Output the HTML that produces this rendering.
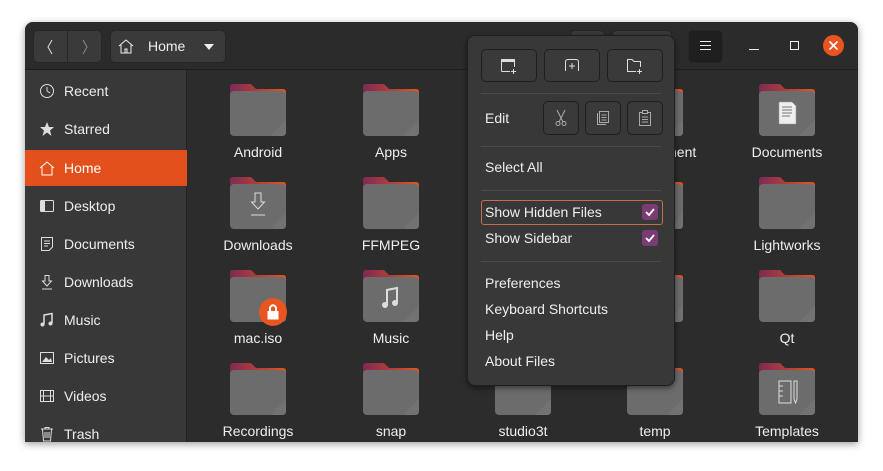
<!DOCTYPE html>
<html><head><meta charset="utf-8"><style>
*{margin:0;padding:0;box-sizing:border-box}
body{width:883px;height:471px;background:#fff;position:relative;overflow:hidden;font-family:"Liberation Sans","DejaVu Sans",sans-serif;color:#eee}
.win{position:absolute;left:25px;top:22px;width:833px;height:420px;background:#2c2c2c;border-radius:8px 8px 0 0;overflow:hidden;box-shadow:0 2px 8px rgba(0,0,0,.4)}
.hdr{position:absolute;left:0;top:0;width:833px;height:48px;background:#2b2b2b;border-bottom:1px solid #1d1d1d}
.btn{position:absolute;background:#3a3a3a;border:1px solid #262626;border-radius:5px}
.side{position:absolute;left:0;top:48px;width:162px;height:372px;background:#383838;border-right:1px solid #222}
.si{position:absolute;left:0;width:162px;height:36px;font-size:14px;line-height:36px;padding-left:39px}
.si svg{position:absolute;left:14px;top:10px}
.f{position:absolute;width:132px;text-align:center;font-size:14px}
.f svg{display:block;margin:0 auto;overflow:visible}
.f span{display:block;margin-top:8px}
.menu{position:absolute;left:467px;top:35px;width:208px;height:351px;background:#383838;border:1px solid #1f1f1f;border-radius:8px;box-shadow:0 2px 6px rgba(0,0,0,.5)}
.mb{position:absolute;background:#3a3a3a;border:1px solid #1f1f1f;border-radius:5px}
.mt{position:absolute;left:17px;font-size:14px}
.sep{position:absolute;left:13px;width:180px;height:1px;background:#4a4a4a}
.chk{position:absolute;left:174px;width:16px;height:16px;background:#7a3c72;border-radius:3px}
</style></head><body>
<svg width="0" height="0" style="position:absolute"><defs>
<linearGradient id="g" x1="0" x2="1" y1="0" y2="0"><stop offset="0" stop-color="#7e2a55"/><stop offset="1" stop-color="#e4541f"/></linearGradient>
<symbol id="fd" viewBox="0 0 56 52"><path d="M3 0H21L26 5H53Q56 5 56 8V20H0V3Q0 0 3 0Z" fill="url(#g)"/><rect y="7" width="56" height="45" rx="4" fill="#6c6c6c"/><path d="M56 36V48Q56 52 52 52H40Z" fill="#727272"/></symbol>
</defs></svg>
<div class="win">
<div class="hdr">
 <div class="btn" style="left:8px;top:8px;width:69px;height:33px"></div>
 <div style="position:absolute;left:42px;top:8px;width:1px;height:33px;background:#262626"></div>
 <svg style="position:absolute;left:20px;top:17px" width="10" height="16"><path d="M7 1L3 8L7 15" stroke="#ddd" fill="none"/></svg>
 <svg style="position:absolute;left:55px;top:17px" width="10" height="16"><path d="M3 1L7 8L3 15" stroke="#888" fill="none"/></svg>
 <div class="btn" style="left:85px;top:8px;width:116px;height:33px"></div>
 <svg style="position:absolute;left:93px;top:16px" width="16" height="16"><path d="M1 8L8 2L15 8M3 7V15H13V7M7 15V11H9V15" stroke="#eee" fill="none"/></svg>
 <div style="position:absolute;left:123px;top:16px;font-size:14px">Home</div>
 <svg style="position:absolute;left:178px;top:21px" width="12" height="8"><path d="M1 1H11L6 7Z" fill="#eee"/></svg>
 <div class="btn" style="left:545px;top:8px;width:35px;height:33px"></div>
 <div class="btn" style="left:587px;top:8px;width:60px;height:33px"></div>
 <div class="btn" style="left:663px;top:8px;width:35px;height:33px;background:#1f1f1f"></div>
 <div style="position:absolute;left:675px;top:19px;width:11px;height:1px;background:#eee;box-shadow:0 4px 0 #eee,0 8px 0 #eee"></div>
 <div style="position:absolute;left:724px;top:27px;width:10px;height:1px;background:#eee"></div>
 <div style="position:absolute;left:765px;top:19px;width:9px;height:9px;border:1px solid #eee"></div>
 <div style="position:absolute;left:798px;top:13px;width:21px;height:21px;border-radius:50%;background:#e95420"></div>
 <svg style="position:absolute;left:803px;top:18px" width="11" height="11"><path d="M1.5 1.5L9.5 9.5M9.5 1.5L1.5 9.5" stroke="#fff" stroke-width="1.6"/></svg>
</div>
<div class="side">
 <div class="si" style="top:3px"><svg width="16" height="16"><circle cx="8" cy="8" r="6.5" stroke="#ddd" fill="none"/><path d="M8 4V8L11 10" stroke="#ddd" fill="none"/></svg>Recent</div>
 <div class="si" style="top:41px"><svg width="16" height="16"><path d="M8 1L10 6H15L11 9.5L12.5 15L8 11.5L3.5 15L5 9.5L1 6H6Z" fill="#ddd"/></svg>Starred</div>
 <div class="si" style="top:80px;background:#e4501b;color:#fff"><svg width="16" height="16"><path d="M1 8L8 2L15 8M3 7V15H13V7" stroke="#fff" fill="none"/></svg>Home</div>
 <div class="si" style="top:118px"><svg width="16" height="16"><rect x="1.5" y="2.5" width="13" height="11" rx="1" stroke="#ddd" fill="none"/><rect x="2" y="3" width="4" height="10" fill="#ddd"/></svg>Desktop</div>
 <div class="si" style="top:156px"><svg width="16" height="16"><path d="M2.5 1.5H13.5V11L10 14.5H2.5Z" stroke="#ddd" fill="none"/><path d="M5 5H11M5 7.5H11M5 10H9" stroke="#ddd"/></svg>Documents</div>
 <div class="si" style="top:194px"><svg width="16" height="16"><path d="M6 1.5H10V7H12.5L8 12L3.5 7H6Z M3 15H13" stroke="#ddd" fill="none"/></svg>Downloads</div>
 <div class="si" style="top:232px"><svg width="16" height="16"><path d="M5 12V3L13 1.5V11" stroke="#ddd" stroke-width="1.5" fill="none"/><circle cx="3.5" cy="12.5" r="2" fill="#ddd"/><circle cx="11.5" cy="11.5" r="2" fill="#ddd"/></svg>Music</div>
 <div class="si" style="top:270px"><svg width="16" height="16"><rect x="1.5" y="2.5" width="13" height="11" stroke="#ddd" fill="none"/><path d="M3 12L7 7L10 10L12 8L13 12Z" fill="#ddd"/></svg>Pictures</div>
 <div class="si" style="top:308px"><svg width="16" height="16"><rect x="1.5" y="2.5" width="13" height="11" stroke="#ddd" fill="none"/><path d="M4.5 2.5V13.5M11.5 2.5V13.5M1.5 8H14.5" stroke="#ddd"/></svg>Videos</div>
 <div class="si" style="top:346px"><svg width="16" height="16"><path d="M2 3H14M6 3V1.5H10V3M3.5 3.5L4.5 15H11.5L12.5 3.5M6 6V12M8 6V12M10 6V12" stroke="#ddd" fill="none"/></svg>Trash</div>
</div>
<!-- grid -->
<div class="f" style="left:167px;top:62px"><svg width="56" height="52"><use href="#fd"/></svg><span>Android</span></div>
<div class="f" style="left:300px;top:62px"><svg width="56" height="52"><use href="#fd"/></svg><span>Apps</span></div>
<div class="f" style="left:432px;top:62px"><svg width="56" height="52"><use href="#fd"/></svg><span>Desktop</span></div>
<div class="f" style="left:564px;top:62px"><svg width="56" height="52"><use href="#fd"/></svg><span>Development</span></div>
<div class="f" style="left:696px;top:62px"><svg width="56" height="52"><use href="#fd"/><path d="M20 18H33L37 22V40H20Z" fill="#eee" stroke="#999" stroke-width=".5"/><path d="M23 23H33M23 26H33M23 29H33M23 32H31" stroke="#777"/></svg><span>Documents</span></div>

<div class="f" style="left:167px;top:155px"><svg width="56" height="52"><use href="#fd"/><path d="M25 16H31V25H34.5L28 32L21.5 25H25Z M21 38H35" stroke="#ddd" fill="none"/></svg><span>Downloads</span></div>
<div class="f" style="left:300px;top:155px"><svg width="56" height="52"><use href="#fd"/></svg><span>FFMPEG</span></div>
<div class="f" style="left:432px;top:155px"><svg width="56" height="52"><use href="#fd"/></svg><span>x</span></div>
<div class="f" style="left:564px;top:155px"><svg width="56" height="52"><use href="#fd"/></svg><span>Hobby</span></div>
<div class="f" style="left:696px;top:155px"><svg width="56" height="52"><use href="#fd"/></svg><span>Lightworks</span></div>

<div class="f" style="left:167px;top:248px"><svg width="56" height="52"><use href="#fd"/><circle cx="43" cy="42" r="14" fill="#e95420"/><rect x="37.5" y="41" width="11" height="8.5" fill="#fff"/><path d="M40 41V37.5Q43 33 46 37.5V41" stroke="#fff" stroke-width="2" fill="none"/></svg><span>mac.iso</span></div>
<div class="f" style="left:300px;top:248px"><svg width="56" height="52"><use href="#fd"/><path d="M24 35V20L34 18V32" stroke="#ddd" stroke-width="2" fill="none"/><circle cx="22" cy="35" r="3" fill="#ddd"/><circle cx="32" cy="33" r="3" fill="#ddd"/></svg><span>Music</span></div>
<div class="f" style="left:432px;top:248px"><svg width="56" height="52"><use href="#fd"/></svg><span>x</span></div>
<div class="f" style="left:564px;top:248px"><svg width="56" height="52"><use href="#fd"/></svg><span>x</span></div>
<div class="f" style="left:696px;top:248px"><svg width="56" height="52"><use href="#fd"/></svg><span>Qt</span></div>

<div class="f" style="left:167px;top:341px"><svg width="56" height="52"><use href="#fd"/></svg><span>Recordings</span></div>
<div class="f" style="left:300px;top:341px"><svg width="56" height="52"><use href="#fd"/></svg><span>snap</span></div>
<div class="f" style="left:432px;top:341px"><svg width="56" height="52"><use href="#fd"/></svg><span>studio3t</span></div>
<div class="f" style="left:564px;top:341px"><svg width="56" height="52"><use href="#fd"/></svg><span>temp</span></div>
<div class="f" style="left:696px;top:341px"><svg width="56" height="52"><use href="#fd"/><path d="M20 18H32V40H20Z" fill="none" stroke="#ddd"/><path d="M20 23H24M20 28H24M20 33H24M35 18V36L36.5 40L38 36V18Z" stroke="#ddd" fill="none"/></svg><span>Templates</span></div>
</div>
<!-- menu -->
<div class="menu">
 <div class="mb" style="left:13px;top:13px;width:56px;height:33px"></div>
 <svg style="position:absolute;left:32px;top:22px" width="18" height="16"><path d="M1.5 13.5V1.5H14.5V9M1.5 13.5H10" stroke="#ddd" fill="none"/><path d="M1.5 3H14.5" stroke="#ddd" stroke-width="2"/><path d="M11 13.5H16M13.5 11V16" stroke="#ddd"/></svg>
 <div class="mb" style="left:76px;top:13px;width:56px;height:33px"></div>
 <svg style="position:absolute;left:96px;top:22px" width="16" height="14"><path d="M1.5 13V4Q1.5 1.5 4 1.5H12Q14.5 1.5 14.5 4V13M5 8H11M8 5V11" stroke="#ddd" fill="none"/></svg>
 <div class="mb" style="left:139px;top:13px;width:56px;height:33px"></div>
 <svg style="position:absolute;left:158px;top:22px" width="18" height="16"><path d="M10 13.5H1.5V1.5H6L8 3.5H14.5V9" stroke="#ddd" fill="none"/><path d="M11 13.5H16M13.5 11V16" stroke="#ddd"/></svg>
 <div class="sep" style="top:57px"></div>
 <div class="mt" style="top:74px">Edit</div>
 <div class="mb" style="left:75px;top:65px;width:36px;height:34px"></div>
 <svg style="position:absolute;left:86px;top:73px" width="14" height="18"><path d="M3 1L9 13M11 1L5 13" stroke="#aaa" fill="none"/><circle cx="4" cy="14.5" r="2" stroke="#aaa" fill="none"/><circle cx="10" cy="14.5" r="2" stroke="#aaa" fill="none"/></svg>
 <div class="mb" style="left:117px;top:65px;width:36px;height:34px"></div>
 <svg style="position:absolute;left:128px;top:74px" width="14" height="16"><path d="M1.5 3V14.5H10" stroke="#aaa" fill="none"/><rect x="3.5" y="1.5" width="9" height="11" stroke="#aaa" fill="none"/><path d="M5.5 5H10.5M5.5 7.5H10.5M5.5 10H10.5" stroke="#aaa"/></svg>
 <div class="mb" style="left:159px;top:65px;width:36px;height:34px"></div>
 <svg style="position:absolute;left:170px;top:73px" width="14" height="18"><rect x="1.5" y="3.5" width="11" height="13" stroke="#aaa" fill="none"/><rect x="4.5" y="1.5" width="5" height="3" stroke="#aaa" fill="#3a3a3a"/><path d="M4 8H10M4 10.5H10M4 13H10" stroke="#aaa"/></svg>
 <div class="sep" style="top:110px"></div>
 <div class="mt" style="top:123px">Select All</div>
 <div class="sep" style="top:154px"></div>
 <div style="position:absolute;left:13px;top:164px;width:182px;height:25px;border:1.5px solid #c0704c;border-radius:3px"></div>
 <div class="mt" style="top:168px">Show Hidden Files</div>
 <div class="chk" style="top:168px"><svg width="16" height="16"><path d="M4 8L7 11L12 5" stroke="#fff" stroke-width="1.8" fill="none"/></svg></div>
 <div class="mt" style="top:194px">Show Sidebar</div>
 <div class="chk" style="top:194px"><svg width="16" height="16"><path d="M4 8L7 11L12 5" stroke="#fff" stroke-width="1.8" fill="none"/></svg></div>
 <div class="sep" style="top:225px"></div>
 <div class="mt" style="top:239px">Preferences</div>
 <div class="mt" style="top:265px">Keyboard Shortcuts</div>
 <div class="mt" style="top:291px">Help</div>
 <div class="mt" style="top:317px">About Files</div>
</div>
</body></html>
